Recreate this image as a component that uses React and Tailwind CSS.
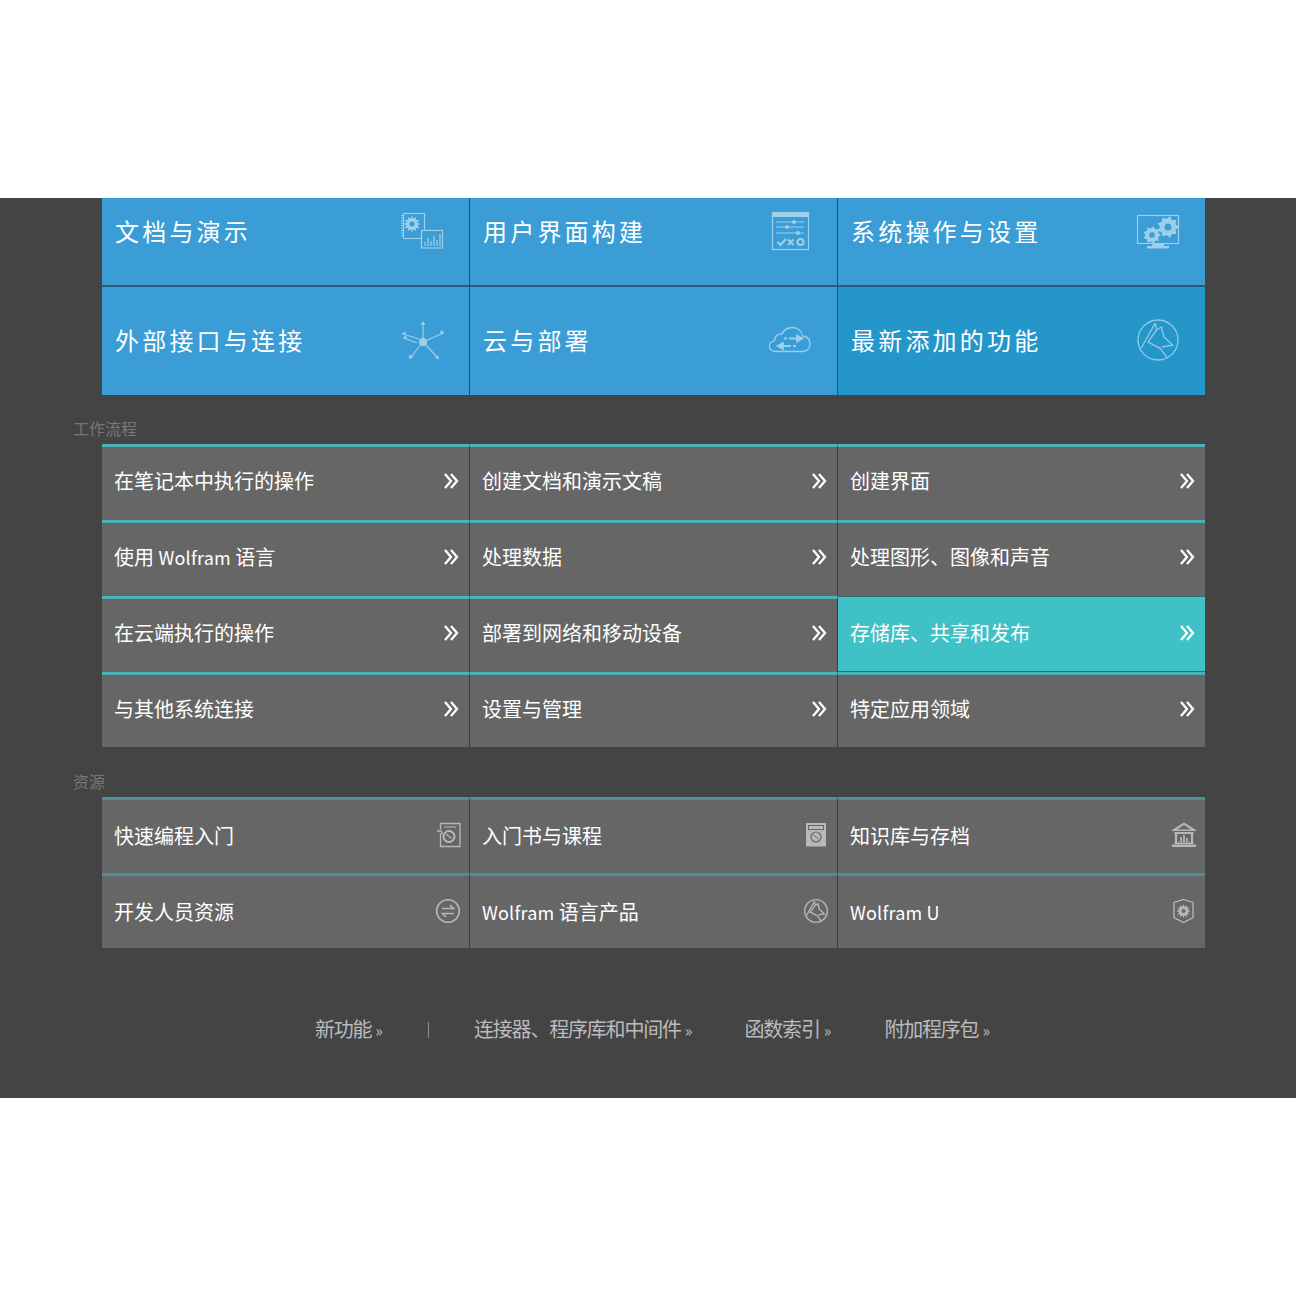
const Svg = ({ s = 44, children, op = "opacity-50", color = "text-white" }) => (
  <svg width={s} height={s} viewBox={`0 0 ${s} ${s}`} fill="none" stroke="currentColor" className={`shrink-0 ${color} ${op}`}>
    {children}
  </svg>
);

const gearTeeth = (cx, cy, r1, r2, n) => {
  let d = "";
  for (let i = 0; i < n * 2; i++) {
    const a = (Math.PI * i) / n;
    const r = i % 2 ? r1 : r2;
    d += `${i ? "L" : "M"}${(cx + r * Math.cos(a)).toFixed(2)} ${(cy + r * Math.sin(a)).toFixed(2)}`;
  }
  return d + "Z";
};

const DocIcon = () => (
  <Svg>
    <rect x="3.500" y="4.500" width="21" height="25" strokeWidth="1.200" />
    <path d="M2 6v22" strokeDasharray="1 1.500" strokeWidth="2" />
    <path d={gearTeeth(12, 15, 5.500, 8.500, 12)} fill="currentColor" stroke="none" />
    <circle cx="12" cy="15" r="2.500" fill="#3a9dd6" stroke="none" />
    <rect x="21.500" y="21.500" width="21" height="17.500" fill="#3a9dd6" strokeWidth="1.200" />
    <path d="M25 37v-4M28 37v-8M31 37v-5M34 37v-10M37 37v-6M40 37v-12" strokeWidth="1.300" />
  </Svg>
);

const UiIcon = () => (
  <Svg>
    <rect x="4.500" y="3.500" width="36" height="37" strokeWidth="1.200" />
    <rect x="4" y="3" width="37" height="5" fill="currentColor" stroke="none" />
    <path d="M8 13h28M8 18h28M8 24h28" />
    <circle cx="26" cy="13" r="2" fill="currentColor" stroke="none" />
    <circle cx="19" cy="18" r="2" fill="currentColor" stroke="none" />
    <circle cx="30" cy="24" r="2" fill="currentColor" stroke="none" />
    <path d="M9.500 33l3 3L18 30M20 30.500l5.500 5.500M25.500 30.500L20 36" strokeWidth="2.200" />
    <circle cx="32.500" cy="33" r="3" strokeWidth="2.200" />
  </Svg>
);

const SysIcon = () => (
  <Svg>
    <rect x="1.500" y="6.500" width="41" height="28" strokeWidth="1.200" />
    <path d="M16 34h12v3H16zM11 37h22v2.500H11z" fill="currentColor" stroke="none" />
    <path d={gearTeeth(32, 18, 8, 11, 9)} fill="currentColor" stroke="none" />
    <circle cx="32" cy="18" r="3.500" fill="#3a9dd6" stroke="none" />
    <path d={gearTeeth(16, 26, 6.500, 9, 9)} fill="currentColor" stroke="none" />
    <circle cx="16" cy="26" r="2.800" fill="#3a9dd6" stroke="none" />
  </Svg>
);

const NetIcon = () => (
  <Svg>
    <circle cx="23" cy="24" r="4" fill="currentColor" stroke="none" />
    <path d="M23 24V5M23 24l20-9M23 24l14 15M23 24L11 39M19 21L3 16M17 25L4 20" strokeWidth="1.200" />
    <path d="M20.500 7l2.500-4 2.500 4zM40 12.500l4.500 1.500-3 3.500zM34.500 39.500l4 2 0-4.500zM8.500 37l1 4.500 4-3zM5.500 13.500l-4 2.500 4 1.500zM6.500 17.500l-4 2.500 4 1.500z" fill="currentColor" stroke="none" />
  </Svg>
);

const CloudIcon = () => (
  <Svg>
    <path d="M7 33.500c-3.500 0-5.500-2.500-5.500-5.300 0-3 2-5 5-5.400 0-4.500 3.500-7.500 7.500-6.800C16 12 20 9.500 24.500 9.500c5.500 0 9.500 3.500 10 8.500 4.500.5 7.500 3.500 7.500 7.700 0 4.500-3 7.800-7 7.800z" strokeWidth="1.300" />
    <path d="M21 20.500h8M29 17.500l5.500 3-5.500 3zM16 20.500h3M15 28h8M15 25l-5.500 3 5.500 3zM25 28h3" fill="currentColor" strokeWidth="1.800" />
  </Svg>
);

const Wolf = ({ sw = 1.300 }) => (
  <>
    <circle cx="22" cy="22" r="20" strokeWidth={sw} />
    <path
      d="M19.300 5L5.300 30M19.300 5L20.500 12L25.500 9L27.700 18.700L36.700 27L26 29M20.500 12L12 24L24.300 30.300L31 39.500"
      strokeWidth={sw}
    />
  </>
);

const WolfIcon = () => (
  <Svg>
    <Wolf />
  </Svg>
);

const SmallSvg = ({ children }) => (
  <Svg s={26} op="opacity-100" color="text-[#b8b8b8]">
    {children}
  </Svg>
);

const BookGlobe = () => (
  <SmallSvg>
    <path d="M5.500 1.500h19.500v23H5.500v-12M5.500 7.500v-6M2 9h4l1 2-2 1.500" strokeWidth="1.300" />
    <circle cx="14" cy="14.500" r="5.500" strokeWidth="2" />
    <path d="M11 12l5.500 4.500" strokeWidth="1.200" />
    <path d="M9 5h12" strokeWidth="1" />
  </SmallSvg>
);

const Exchange = () => (
  <SmallSvg>
    <circle cx="13" cy="13" r="11.300" strokeWidth="1.600" />
    <path d="M7 10.500h11.500l-3.500-3.500M19 15.500H7.500l3.500 3.500" strokeWidth="1.600" />
  </SmallSvg>
);

const BookSolid = () => (
  <SmallSvg>
    <rect x="3" y="1" width="20" height="23.500" fill="currentColor" stroke="none" />
    <rect x="5.500" y="3.500" width="15" height="4" stroke="#666" strokeWidth="1" />
    <circle cx="13" cy="15" r="5" stroke="#666" strokeWidth="1.200" />
    <path d="M10.500 13l5 4" stroke="#666" />
  </SmallSvg>
);

const SmallWolf = () => (
  <svg width="26" height="26" viewBox="-1 -1 46 46" fill="none" stroke="currentColor" className="shrink-0 text-[#b8b8b8]">
    <Wolf sw={2.400} />
  </svg>
);

const Bank = () => (
  <SmallSvg>
    <path fillRule="evenodd" d="M13 0.500L1 8v1h24V8zM13 3L6 7.500h14z" fill="currentColor" stroke="none" />
    <path d="M3.500 10h19v2h-19zM3.500 20.500h19v1.500h-19zM1 22.500h24V25H1z" fill="currentColor" stroke="none" />
    <path d="M5 12v9M21 12v9" strokeWidth="2.200" />
    <path d="M10 20v-5M13 20v-7M16 20v-4" strokeWidth="1.700" />
  </SmallSvg>
);

const Shield = () => (
  <SmallSvg>
    <path d="M12.500 1.500l9.500 3v15L12.500 24.500 3 19.500v-15z" strokeWidth="1.300" />
    <path d={gearTeeth(12.500, 13, 4.500, 7, 12)} fill="currentColor" stroke="none" />
    <circle cx="12.500" cy="13" r="2" fill="#666" stroke="none" />
  </SmallSvg>
);

const Chevrons = ({ active, last }) => (
  <svg
    width="16"
    height="18"
    viewBox="0 0 16 18"
    fill="none"
    stroke="currentColor"
    strokeWidth="2.300"
    className={`shrink-0 text-white ${active ? "-mt-[2px]" : last ? "-mt-[5px]" : "-mt-[6px]"}`}
  >
    <path d="M2 2l6 7-6 7M8 2l6 7-6 7" />
  </svg>
);

const Latin = ({ children }) => <span className="text-[18px] tracking-[0.2px]">{children}</span>;

const blueRows = [
  [
    ["文档与演示", DocIcon],
    ["用户界面构建", UiIcon],
    ["系统操作与设置", SysIcon],
  ],
  [
    ["外部接口与连接", NetIcon],
    ["云与部署", CloudIcon],
    ["最新添加的功能", WolfIcon],
  ],
];

const workflow = [
  "在笔记本中执行的操作",
  "创建文档和演示文稿",
  "创建界面",
  <>使用 <Latin>Wolfram</Latin> 语言</>,
  "处理数据",
  "处理图形、图像和声音",
  "在云端执行的操作",
  "部署到网络和移动设备",
  "存储库、共享和发布",
  "与其他系统连接",
  "设置与管理",
  "特定应用领域",
];

const resources = [
  ["快速编程入门", BookGlobe],
  ["入门书与课程", BookSolid],
  ["知识库与存档", Bank],
  ["开发人员资源", Exchange],
  [<><Latin>Wolfram</Latin> 语言产品</>, SmallWolf],
  [<Latin>Wolfram U</Latin>, Shield],
];

const colsClass = "grid w-[1103px] ml-[102px] grid-cols-[368px_368px_367px]";

export default function App() {
  return (
    <div className="bg-white min-h-[1296px] font-['Noto_Sans_CJK_SC','Noto_Sans',sans-serif]">
      <div className="h-[198px]" />
      <div className="bg-[#444444] h-[900px] overflow-hidden">
        {/* blue tiles */}
        <div className={colsClass}>
          {blueRows.map((row, r) =>
            row.map(([label, Icon], c) => (
              <div
                key={c + "-" + r}
                className={`flex justify-between pl-[13px] pr-[25px] text-white text-[24px] leading-[32px] tracking-[3.2px] ${
                  c < 2 ? "border-r border-r-[#2c4a5c]" : ""
                } ${r === 0 ? "h-[89px] border-b-2 border-b-[#2a5a76] pt-[17px] items-start" : "h-[108px] items-center"} ${
                  r === 1 && c === 2 ? "bg-[#2596ca]" : "bg-[#3a9dd6]"
                }`}
              >
                <span className={r === 1 ? "-mt-[3px]" : ""}>{label}</span>
                <span className={r === 0 ? "-mt-[6px]" : "-mt-[2px]"}>
                  <Icon />
                </span>
              </div>
            ))
          )}
        </div>

        {/* workflow */}
        <div className="ml-[73px] mt-[21px] mb-[4px] text-[16px] leading-[24px] text-[#767676]">工作流程</div>
        <div className={colsClass}>
          {workflow.map((label, i) => {
            const active = i === 8;
            return (
              <div
                key={i}
                className={`flex items-center justify-between pl-[12px] pr-[10px] text-[20px] leading-[28px] text-white ${
                  i >= 9 ? "h-[75px]" : "h-[76px]"
                } ${i % 3 < 2 ? "border-r border-r-[#3c3c3c]" : ""} ${
                  active
                    ? "bg-[#3fc1c5] border-y border-y-[#2f6f74]"
                    : "bg-[#666666] border-t-[3px] border-t-[#4bb3b8]"
                }`}
              >
                <span className={active ? "-mt-[3px]" : "-mt-[5px]"}>{label}</span>
                <Chevrons active={active} last={i >= 9} />
              </div>
            );
          })}
        </div>

        {/* resources */}
        <div className="ml-[73px] mt-[22px] mb-[4px] text-[16px] leading-[24px] text-[#767676]">资源</div>
        <div className={colsClass}>
          {resources.map(([label, Icon], i) => (
            <div
              key={i}
              className={`flex items-center justify-between pl-[12px] pr-[8px] bg-[#666666] border-t-[3px] border-t-[#4f8c9e] text-[20px] leading-[28px] text-white ${
                i >= 3 ? "h-[75px]" : "h-[76px]"
              } ${i % 3 < 2 ? "border-r border-r-[#3c3c3c]" : ""}`}
            >
              <span className="-mt-[1px]">{label}</span>
              <span className="-mt-[3px]">
                <Icon />
              </span>
            </div>
          ))}
        </div>

        {/* footer links */}
        <div className="mt-[66px] flex items-center justify-center text-[20px] leading-[30px] text-[#bbbbbb] tracking-[-1.2px] pl-[9px]">
          <span>新功能<span className="ml-[4px] text-[16px] tracking-normal">»</span></span>
          <span className="mx-[45px] h-[16px] w-px bg-[#8f8f8f]" />
          <span>连接器、程序库和中间件<span className="ml-[4px] text-[16px] tracking-normal">»</span></span>
          <span className="ml-[52px]">函数索引<span className="ml-[4px] text-[16px] tracking-normal">»</span></span>
          <span className="ml-[53px]">附加程序包<span className="ml-[4px] text-[16px] tracking-normal">»</span></span>
        </div>
      </div>
    </div>
  );
}
